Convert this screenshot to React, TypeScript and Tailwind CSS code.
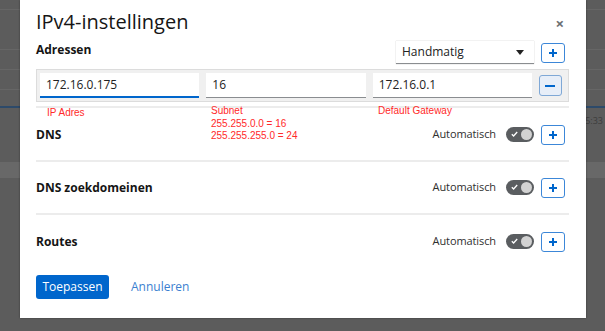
import React from "react";

const Plus = () => (
  <svg width="10" height="10" viewBox="0 0 10 10">
    <path d="M5 1v8M1 5h8" stroke="#0066cc" strokeWidth="2" />
  </svg>
);

const PlusBtn = () => (
  <div className="flex h-[20px] w-[24px] items-center justify-center rounded-[3px] border border-[#3c87d8] bg-white">
    <Plus />
  </div>
);

const Toggle = () => (
  <div className="relative flex h-[15px] w-[28px] items-center rounded-full bg-[#5a5d60]">
    <svg className="absolute left-[5px] top-[4px]" width="7" height="6" viewBox="0 0 7 6">
      <path d="M0.8 3.2l1.8 1.8L6.2 1" stroke="#fff" strokeWidth="1.3" fill="none" />
    </svg>
    <div className="absolute right-[2px] top-[2px] h-[11px] w-[11px] rounded-full bg-[#d2d2d2]" />
  </div>
);

const Section = ({ title, border = true }: { title: string; border?: boolean }) => (
  <div className={`flex h-[53px] items-center justify-between pr-[4px] ${border ? "border-b-2 border-[#ececec]" : ""}`}>
    <div className="text-[12px] font-bold text-[#151515]">{title}</div>
    <div className="flex items-center">
      <span className="mr-[10px] text-[11px] tracking-[-0.1px] text-[#2f2f2f]">Automatisch</span>
      <Toggle />
      <div className="ml-[7px]">
        <PlusBtn />
      </div>
    </div>
  </div>
);

const Input = ({ value, active }: { value: string; active?: boolean }) => (
  <div
    className={`flex h-[25px] flex-1 items-center bg-white px-[6px] text-[12px] text-[#222] ${
      active ? "border-b-2 border-[#0066cc]" : "border-b border-[#8a8d90]"
    }`}
  >
    {value}
  </div>
);

export default function App() {
  return (
    <div
      className="relative h-[331px] w-[605px] overflow-hidden bg-[#5c5c5c]"
      style={{ fontFamily: "'Open Sans', 'Noto Sans', sans-serif" }}
    >
      {/* background page */}
      <div className="flex flex-col">
        <div className="h-[10px] border-b border-[#666]" />
        <div className="h-[40px] border-b border-[#666]" />
        <div className="h-[20px] border-b border-[#666]" />
        <div className="h-[20px] border-b border-[#666]" />
        <div className="h-[18px] border-b-2 border-[#2d4a6a]" />
        <div className="flex h-[24px] justify-end pr-[2px] pt-[6px] text-[9px] text-[#3c3c3c]">15:33</div>
        <div className="h-[30px]" />
        <div className="h-[16px] bg-[#686868]" />
      </div>

      {/* modal */}
      <div className="absolute left-[20px] top-0 h-[318px] w-[566px] bg-white pl-[16px] pr-[17px] shadow-[0_0_2px_rgba(0,0,0,0.4)]">
        <div className="flex h-[35px] items-end justify-between">
          <div className="text-[20px] leading-[26px] text-[#151515]">IPv4-instellingen</div>
          <div className="mb-[4px] mr-[5px] text-[15px] font-bold leading-none text-[#6a6e73]">×</div>
        </div>

        <div className="mt-[5px] flex h-[25px] items-center justify-between pr-[4px]">
          <div className="mb-[6px] text-[12px] font-bold text-[#151515]">Adressen</div>
          <div className="flex items-center">
            <div className="flex h-[23px] w-[138px] items-center justify-between border-b border-[#8a8d90] bg-white pl-[6px] pr-[10px] text-[12px] text-[#222] shadow-[0_0_1px_rgba(0,0,0,0.3)]">
              Handmatig
              <svg width="8" height="5" viewBox="0 0 8 5">
                <path d="M0 0h8L4 5z" fill="#222" />
              </svg>
            </div>
            <div className="ml-[7px]">
              <PlusBtn />
            </div>
          </div>
        </div>

        <div className="mt-[4px] flex h-[33px] items-center gap-[7px] border border-[#dcdcdc] bg-[#f0f0f0] pl-[3px] pr-[6px]">
          <Input value="172.16.0.175" active />
          <Input value="16" />
          <Input value="172.16.0.1" />
          <div className="flex h-[21px] w-[23px] items-center justify-center rounded-[3px] border border-[#7fa8d6] bg-[#e7eef8]">
            <svg width="10" height="2" viewBox="0 0 10 2">
              <path d="M0 1h10" stroke="#0066cc" strokeWidth="2" />
            </svg>
          </div>
        </div>
        <div className="mt-[4px] h-[2px] bg-[#ececec]" />

        <div className="mt-[1px]">
          <Section title="DNS" />
          <Section title="DNS zoekdomeinen" />
          <Section title="Routes" border={false} />
        </div>

        <div className="mt-[7px] flex items-center">
          <div className="flex h-[24px] w-[73px] items-center justify-center rounded-[3px] bg-[#0066cc] text-[12px] text-white">
            Toepassen
          </div>
          <div className="ml-[22px] text-[12px] text-[#3b7fd0]">Annuleren</div>
        </div>

        {/* annotations */}
        <div
          className="absolute left-[27px] top-[107px] text-[10px] leading-[12px] text-[#ff2a2a]"
          style={{ fontFamily: "'Liberation Sans', sans-serif" }}
        >
          IP Adres
        </div>
        <div
          className="absolute left-[191px] top-[105px] text-[10px] leading-[12.5px] text-[#ff2a2a]"
          style={{ fontFamily: "'Liberation Sans', sans-serif" }}
        >
          <div>Subnet</div>
          <div>255.255.0.0 = 16</div>
          <div>255.255.255.0 = 24</div>
        </div>
        <div
          className="absolute left-[358px] top-[105px] text-[10px] leading-[12px] text-[#ff2a2a]"
          style={{ fontFamily: "'Liberation Sans', sans-serif" }}
        >
          Default Gateway
        </div>
      </div>
    </div>
  );
}
